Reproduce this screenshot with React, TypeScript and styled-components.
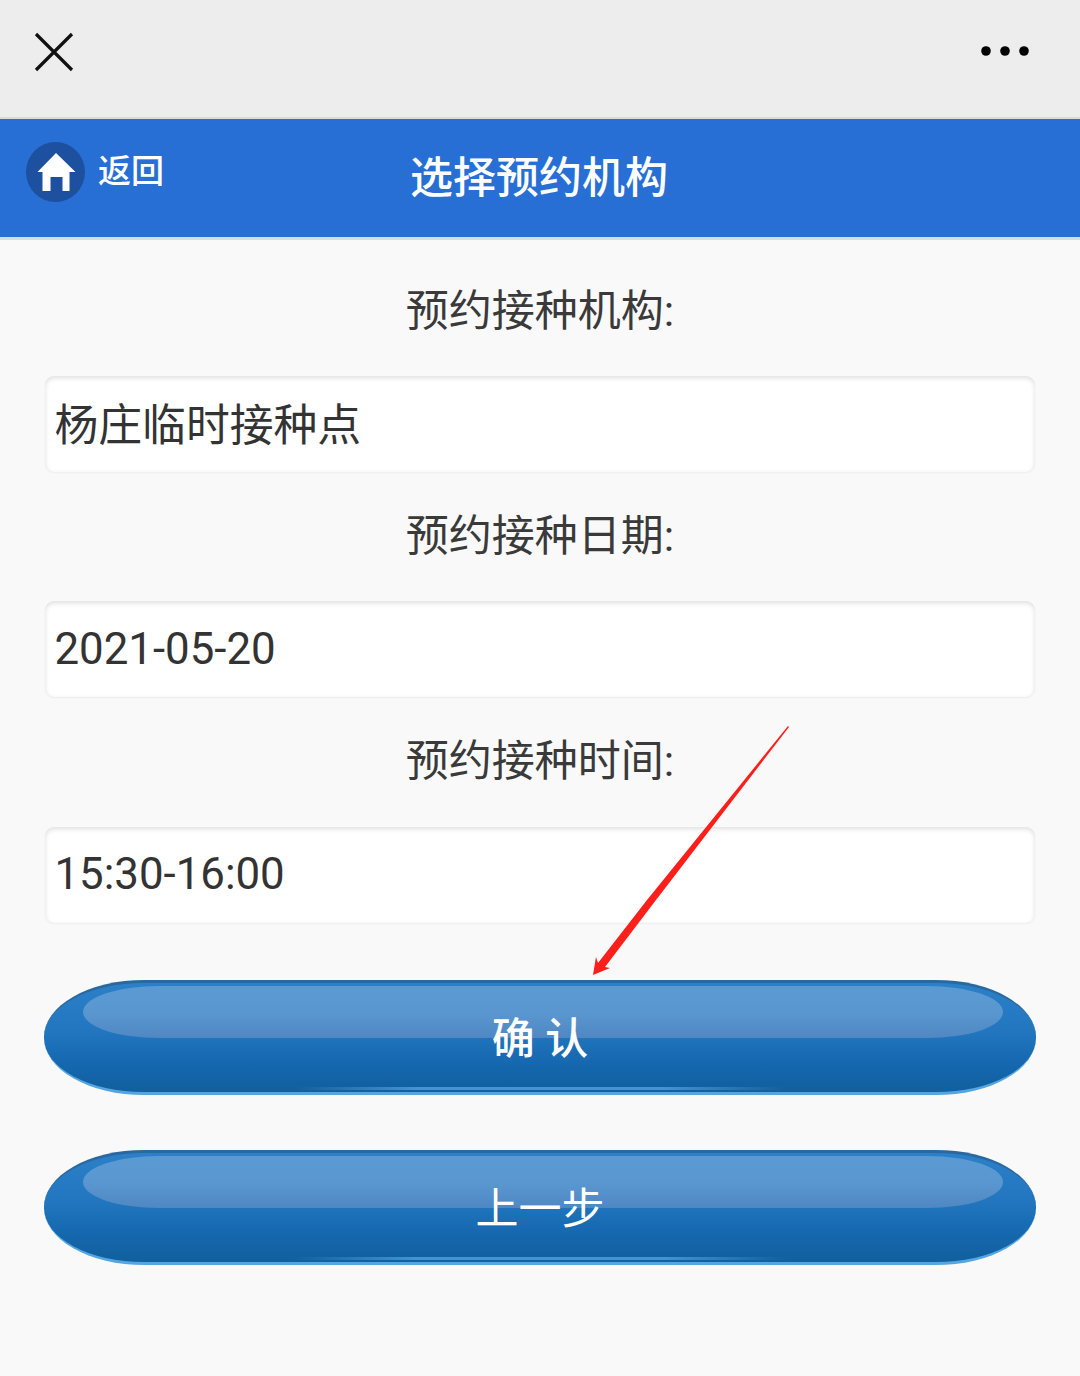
import React from "react";
import styled, { createGlobalStyle } from "styled-components";

const Global = createGlobalStyle`
  html, body { margin: 0; padding: 0; background: #f9f9f9; }
  * { box-sizing: border-box; }
`;

const Page = styled.div`
  position: relative;
  width: 1080px;
  height: 1376px;
  overflow: hidden;
  background: #f9f9f9;
  font-family: Roboto, "Noto Sans CJK SC", "Liberation Sans", sans-serif;
  color: #333;
`;

const TopBar = styled.div`
  height: 119px;
  background: #ededed;
  border-bottom: 2px solid #dbdad8;
  display: flex;
  align-items: flex-start;
  justify-content: space-between;
  padding: 32px 51px 0 34px;
`;

const MoreIcon = styled.svg`
  margin-top: 8px;
`;

const Header = styled.header`
  height: 121px;
  background: #276fd5;
  border-bottom: 3px solid #d6dbe8;
  position: relative;
  display: flex;
  align-items: center;
  justify-content: center;
`;

const Back = styled.div`
  position: absolute;
  left: 26px;
  top: 23px;
  display: flex;
  align-items: center;
  gap: 13px;
`;

const HomeBadge = styled.div`
  width: 59px;
  height: 60px;
  border-radius: 50%;
  background: #1d509f;
  display: flex;
  align-items: center;
  justify-content: center;
`;

const BackText = styled.span`
  color: #fff;
  font-size: 33px;
  line-height: 56px;
  font-weight: 500;
`;

const Title = styled.h1`
  margin: 0 2px 0 0;
  color: #fff;
  font-size: 43px;
  font-weight: 500;
  line-height: 118px;
`;

const Form = styled.main`
  padding: 7px 45px 0;
  display: flex;
  flex-direction: column;
`;

const Label = styled.div`
  height: 129.2px;
  padding-bottom: 9px;
  display: flex;
  align-items: center;
  justify-content: center;
  font-size: 43px;
  color: #3a3a3a;
  font-weight: 400;
`;

const Field = styled.div<{ $lift?: number }>`
  height: 96px;
  width: 990px;
  background: #fff;
  border-radius: 9px;
  box-shadow: inset 0 2px 5px rgba(0, 0, 0, 0.13), 0 1px 2px rgba(0, 0, 0, 0.05);
  display: flex;
  align-items: center;
  padding: 0 9.5px ${(p) => p.$lift ?? 0}px;
  font-size: 43.8px;
  color: #333;
`;

const Actions = styled.div`
  margin-top: 57.4px;
  margin-left: -1px;
  display: flex;
  flex-direction: column;
  gap: 55px;
`;

const GlossButton = styled.button<{ $bold?: boolean }>`
  position: relative;
  width: 992px;
  height: 115px;
  padding: 0;
  border: 0;
  border-top: 3px solid #2a699f;
  border-bottom: 3px solid #55a6e0;
  border-radius: 100px / 57px;
  background: linear-gradient(#2c80c8 0%, #2176bf 45%, #1567ae 75%, #11609f 97%);
  color: #fff;
  font-family: inherit;
  font-size: 43px;
  font-weight: ${(p) => (p.$bold ? 500 : 400)};
  line-height: 112px;
  overflow: hidden;

  &::before {
    content: "";
    position: absolute;
    left: 39px;
    right: 33px;
    top: 3px;
    height: 52px;
    border-radius: 76px / 26px;
    background: linear-gradient(#5a9ad2 0%, #5a97d0 50%, #4f87c2 100%);
  }

  &::after {
    content: "";
    position: absolute;
    left: 250px;
    right: 250px;
    bottom: 2px;
    height: 3px;
    background: linear-gradient(90deg, rgba(70, 150, 215, 0), #3f95d6 25%, #3f95d6 75%, rgba(70, 150, 215, 0));
  }
`;

const ButtonLabel = styled.span`
  position: relative;
`;

const ArrowLayer = styled.svg`
  position: absolute;
  left: 0;
  top: 0;
  pointer-events: none;
`;

export default function App() {
  return (
    <Page>
      <Global />
      <TopBar>
        <svg width="40" height="40" viewBox="0 0 40 40">
          <path d="M2 2 L38 38 M38 2 L2 38" stroke="#111" strokeWidth="3.2" fill="none" />
        </svg>
        <MoreIcon width="48" height="20" viewBox="0 0 48 20">
          <circle cx="5" cy="11" r="4.8" fill="#000" />
          <circle cx="24" cy="11" r="4.8" fill="#000" />
          <circle cx="43" cy="11" r="4.8" fill="#000" />
        </MoreIcon>
      </TopBar>
      <Header>
        <Back>
          <HomeBadge>
            <svg width="40" height="40" viewBox="0 0 40 40">
              <path
                d="M20 1 L39.5 20 L33.5 20 L33.5 39 L26.5 39 L26.5 25 L14.5 25 L14.5 39 L6.5 39 L6.5 20 L1.5 20 Z"
                fill="#fff"
              />
            </svg>
          </HomeBadge>
          <BackText>返回</BackText>
        </Back>
        <Title>选择预约机构</Title>
      </Header>
      <Form>
        <Label>预约接种机构:</Label>
        <Field $lift={5}>杨庄临时接种点</Field>
        <Label>预约接种日期:</Label>
        <Field>2021-05-20</Field>
        <Label>预约接种时间:</Label>
        <Field $lift={1.5}>15:30-16:00</Field>
        <Actions>
          <GlossButton $bold>
            <ButtonLabel>确 认</ButtonLabel>
          </GlossButton>
          <GlossButton>
            <ButtonLabel>上一步</ButtonLabel>
          </GlossButton>
        </Actions>
      </Form>
      <ArrowLayer width="1080" height="1376" viewBox="0 0 1080 1376">
        <path
          d="M789 727 L656 900 L605 967 L610 968 L593 975 L596 957 L598 963 L647 900 L788 726 Z"
          fill="#ff1f1a"
        />
      </ArrowLayer>
    </Page>
  );
}
